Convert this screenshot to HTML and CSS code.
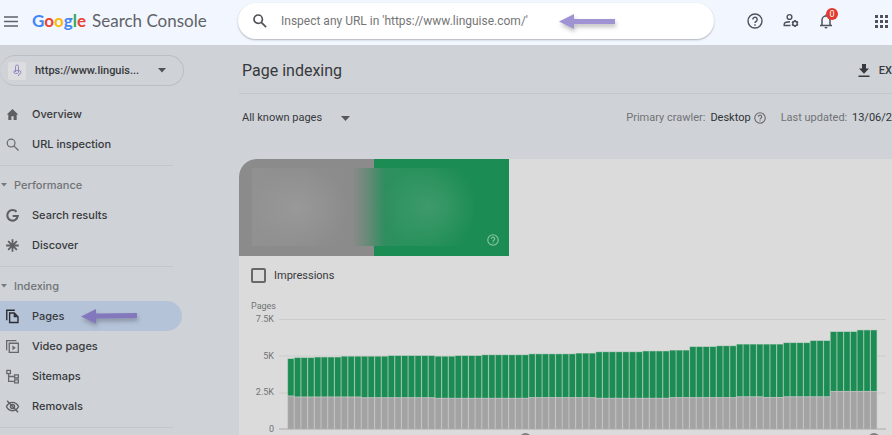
FILE: index.html
```html
<!DOCTYPE html>
<html lang="en">
<head>
<meta charset="utf-8">
<title>Google Search Console</title>
<link rel="stylesheet" href="styles.css">
</head>
<body>
<header class="topbar">
  <div class="brand">
    <button class="icon-btn menu" aria-label="Main menu"><svg width="14" height="11" viewBox="0 0 14 11"><path d="M0 1h14M0 5.5h14M0 10h14" stroke="#5f6368" stroke-width="1.5"/></svg></button>
    <a class="logo" href="#"><span class="google"><span class="b">G</span><span class="r">o</span><span class="y">o</span><span class="b">g</span><span class="g">l</span><span class="r">e</span></span><span class="product">Search Console</span></a>
  </div>
  <form class="search">
    <svg class="search-icon" width="14" height="14" viewBox="0 0 14 14" fill="none" stroke="#4f5257" stroke-width="1.7"><circle cx="5.2" cy="5.2" r="4.2"/><path d="M8.3 8.3l4.8 4.8"/></svg>
    <input type="text" aria-label="Inspect URL" placeholder="Inspect any URL in 'https://www.linguise.com/'">
    <svg class="arrow arrow-search" width="60" height="20" viewBox="0 0 60 20"><path d="M1 8.5L16 1v5h41v5H16v5z" fill="#a093d4"/></svg>
  </form>
  <div class="actions">
    <button class="icon-btn" aria-label="Help"><svg width="16" height="16" viewBox="0 0 16 16" fill="none" stroke="#4f5257" stroke-width="1.4"><circle cx="8" cy="8" r="7"/><path d="M5.8 6.4a2.2 2.2 0 1 1 3.5 1.8C8.500 8.800 8 9.100 8 10.100"/><path d="M8 11.200v1.500"/></svg></button>
    <button class="icon-btn" aria-label="User settings"><svg width="16" height="16" viewBox="0 0 16 16" fill="none" stroke="#4f5257" stroke-width="1.400"><circle cx="6.500" cy="4" r="2.400"/><path d="M7.500 12.500H1.200v-1.200C1.200 9.600 4 8.800 7 8.800"/><circle cx="12" cy="10.500" r="2.200"/><path d="M12 7v1.300M12 12.700V14M9 8.750l1.100.65M13.900 11.600l1.100.65M9 12.250l1.100-.65M13.900 9.400l1.100-.65" stroke-width="1.700"/></svg></button>
    <button class="icon-btn bell" aria-label="Notifications"><svg width="14" height="16" viewBox="0 0 14 16"><path d="M1 12.500h12M3 12.300V7a4 4 0 0 1 8 0v5.300M7 3V1.500" fill="none" stroke="#4f5257" stroke-width="1.500"/><path d="M5.500 14h3a1.500 1.500 0 0 1-3 0z" fill="#4f5257"/></svg><span class="badge">0</span></button>
    <button class="icon-btn" aria-label="Google apps"><svg width="13" height="13" viewBox="0 0 13 13" fill="#4f5257"><path d="M0 0h3v3H0zM5 0h3v3H5zM10 0h3v3h-3zM0 5h3v3H0zM5 5h3v3H5zM10 5h3v3h-3zM0 10h3v3H0zM5 10h3v3H5zM10 10h3v3h-3z"/></svg></button>
  </div>
</header>
<div class="layout">
  <nav class="sidebar">
    <button class="property">
      <span class="favicon"><svg width="9" height="13" viewBox="0 0 9 13" fill="none" stroke="#8f89c4" stroke-width="1"><path d="M2.500 8V2.500a1.500 1.500 0 0 1 3 0V8c0 1-.8 1.400-1.500 1.400H2.300a1.400 1.400 0 0 1 0-2.800h3.900a1.700 1.700 0 0 1 0 3.400L5.200 12"/></svg></span>
      <span class="property-name">https://www.linguis...</span>
      <svg width="8" height="5" viewBox="0 0 8 5"><path d="M0 0h8L4 4.500z" fill="#505256"/></svg>
    </button>
    <a class="item" href="#"><svg viewBox="0 0 14 14"><path d="M7 1L.8 7h1.700v6h3.300V9h2.400v4h3.300V7h1.700z" fill="#5d5f62"/></svg>Overview</a>
    <a class="item" href="#"><svg viewBox="0 0 14 14" fill="none" stroke="#66686b" stroke-width="1.300"><circle cx="5.500" cy="5.500" r="4.200"/><path d="M8.500 8.500l5 5"/></svg>URL inspection</a>
    <hr>
    <button class="group"><svg width="6" height="4" viewBox="0 0 6 4"><path d="M0 0h6L3 3.500z" fill="#77797c"/></svg>Performance</button>
    <a class="item" href="#"><svg viewBox="0 0 14 14"><path d="M11.300 3A5.700 5.700 0 1 0 12.700 7.500H7.200" fill="none" stroke="#5d5f62" stroke-width="2.300"/></svg>Search results</a>
    <a class="item" href="#"><svg viewBox="0 0 14 14"><path d="M7 .2v13.600M.2 7h13.600M2.300 2.300l9.400 9.400M11.700 2.300l-9.400 9.400" stroke="#5d5f62" stroke-width="1.900"/></svg>Discover</a>
    <hr>
    <button class="group"><svg width="6" height="4" viewBox="0 0 6 4"><path d="M0 0h6L3 3.500z" fill="#77797c"/></svg>Indexing</button>
    <a class="item selected" href="#" aria-current="page"><svg viewBox="0 0 14 14" fill="none" stroke="#2b2d31" stroke-width="1.500"><path d="M.8 11V.3h8.700"/><path d="M3.900 3.300h5l4 4v6.200h-9z"/><path d="M8.300 3.500v4.200h4.300z" fill="#2b2d31" stroke="none"/></svg>Pages
      <svg class="arrow arrow-pages" width="60" height="20" viewBox="0 0 60 20"><path d="M1 8.500L16 1v4.500l41-.5v5l-41 .5v5z" fill="#8378bd"/></svg></a>
    <a class="item" href="#"><svg viewBox="0 0 14 14" fill="none" stroke="#66686b" stroke-width="1.400"><path d="M.7 11V.7h10.500"/><path d="M3.500 3.500h9.800v9.800H3.500z"/><path d="M6.900 5.800v5.200l3.700-2.600z" fill="#66686b" stroke="none"/></svg>Video pages</a>
    <a class="item" href="#"><svg viewBox="0 0 14 14" fill="none" stroke="#66686b" stroke-width="1.400"><path d="M.9.500h3.800v3.500H.9zM9.300 5.300h4v3.300h-4zM9.300 10.600h4v3.200h-4zM2.800 4v8.200h6.500M2.800 7h6.500"/></svg>Sitemaps</a>
    <a class="item" href="#"><svg viewBox="0 0 14 14" fill="none" stroke="#5d5f62" stroke-width="1.500"><path d="M.5 7C1.900 4.100 4.100 2.500 7 2.500S12.100 4.100 13.500 7c-1.400 2.900-3.600 4.500-6.500 4.500S1.900 9.900.5 7z"/><circle cx="7" cy="7" r="2.200"/><path d="M1.200.9l11.800 12.200"/></svg>Removals</a>
    <hr>
  </nav>
  <main>
    <div class="title-row">
      <h1>Page indexing</h1>
      <button class="export"><svg width="12" height="14" viewBox="0 0 12 14"><path d="M4 0h4v4.500h3L6 9.800 1 4.500h3zM.500 11.500h11V13H.500z" fill="#37393c"/></svg>EX</button>
    </div>
    <div class="filter-row">
      <button class="filter">All known pages<svg width="9" height="5" viewBox="0 0 9 5"><path d="M0 0h9L4.500 5z" fill="#55575a"/></svg></button>
      <div class="meta">
        <span class="crawler">Primary crawler: <b>Desktop</b><svg width="12" height="12" viewBox="0 0 16 16" fill="none" stroke="#66686b" stroke-width="1.500"><circle cx="8" cy="8" r="7"/><path d="M5.800 6.400a2.200 2.200 0 1 1 3.500 1.800C8.500 8.800 8 9.100 8 10.100M8 11.200v1.500"/></svg></span>
        <span>Last updated: <b>13/06/2</b></span>
      </div>
    </div>
    <section class="card">
      <div class="tiles">
        <div class="tile"></div>
        <div class="tile indexed"><svg width="12" height="12" viewBox="0 0 16 16" fill="none" stroke="#8cc5a5" stroke-width="1.500"><circle cx="8" cy="8" r="7"/><path d="M5.800 6.400a2.200 2.200 0 1 1 3.500 1.800C8.500 8.800 8 9.100 8 10.100M8 11.200v1.500"/></svg></div>
        <div class="smudge"></div>
      </div>
      <label class="impressions"><input type="checkbox">Impressions</label>
      <div class="chart">
        <div class="chart-title">Pages</div>
        <div class="axis"><span>7.5K</span><span>5K</span><span>2.5K</span><span>0</span></div>
        <svg class="plot" id="plot" viewBox="0 0 607 110" preserveAspectRatio="none"></svg>
      </div>
    </section>
  </main>
</div>
<script src="chart.js"></script>
</body>
</html>
```
FILE: styles.css
```css
* { box-sizing: border-box; }

body {
  margin: 0;
  min-height: 100vh;
  display: flex;
  flex-direction: column;
  overflow-x: hidden;
  background: #cfd2d7;
  color: #37393c;
  font: 11px/16px Roboto, "Liberation Sans", sans-serif;
}

button {
  padding: 0;
  border: 0;
  background: none;
  color: inherit;
  font: inherit;
}

a { color: inherit; text-decoration: none; }
svg { display: block; flex: none; }

.topbar {
  display: flex;
  height: 45px;
  background: #f2f6fe;
}

.brand {
  display: flex;
  align-items: center;
  flex: none;
  width: 238px;
  padding: 0 0 3px 4px;
}

.logo {
  display: flex;
  align-items: baseline;
  gap: 6px;
  margin-left: 14px;
  font: 17px/24px Lato, sans-serif;
  color: #5f6368;
  white-space: nowrap;
}

.google { font-weight: 700; }
.b { color: #4285f4; }
.r { color: #ea4335; }
.y { color: #fbbc05; }
.g { color: #34a853; }

.search {
  position: relative;
  flex: 1;
  display: flex;
  align-items: center;
  height: 36px;
  margin-top: 3px;
  padding: 0 15px;
  border-radius: 18px;
  background: #fff;
  box-shadow: 0 1px 2px #aeb2b8;
}

.search input {
  flex: 1;
  min-width: 0;
  margin-left: 14px;
  padding: 0;
  border: 0;
  outline: 0;
  background: none;
  font: 12px/16px Roboto, sans-serif;
}

.search input::placeholder { color: #757575; opacity: 1; }

.arrow {
  position: absolute;
  filter: drop-shadow(1px 3px 2px #00000040);
}

.arrow-search { left: 320px; top: 10px; }

.actions {
  display: flex;
  align-items: center;
  flex: none;
  width: 178px;
  padding: 0 4px 3px 33px;
}

.actions .icon-btn { margin-right: 20px; }
.actions .bell { position: relative; margin-right: 42px; }
.actions .icon-btn:last-child { margin-right: 0; }

.badge {
  position: absolute;
  left: 7px;
  top: -5px;
  width: 12px;
  height: 12px;
  border-radius: 50%;
  background: #e23a2e;
  color: #fff;
  font-size: 9px;
  line-height: 12px;
}

.layout { display: flex; flex: 1; }

.sidebar {
  flex: none;
  width: 239px;
  padding-top: 10px;
}

.property {
  display: flex;
  align-items: center;
  width: 184px;
  height: 31px;
  margin-bottom: 13px;
  padding: 0 17px 0 8px;
  border: 1px solid #bbbec2;
  border-left: 0;
  border-radius: 16px;
  font-weight: 500;
  text-align: left;
}

.favicon {
  display: grid;
  place-items: center;
  width: 18px;
  height: 18px;
  border-radius: 2px;
  background: #dddddf;
}

.property-name { flex: 1; margin-left: 9px; }

.item {
  position: relative;
  display: flex;
  align-items: center;
  gap: 13px;
  width: 182px;
  height: 30px;
  padding-left: 6px;
  border-radius: 0 15px 15px 0;
  font: 500 11px/16px Inter, sans-serif;
}

.item > svg:first-child { width: 13px; height: 13px; overflow: visible; }
.item.selected { background: #b5c3d9; }
.arrow-pages { left: 80px; top: 7px; }

hr {
  width: 173px;
  margin: 6px 0 4px;
  border: 0;
  border-top: 1px solid #c4c7ca;
}

.group {
  display: flex;
  align-items: center;
  gap: 7px;
  height: 30px;
  padding-left: 1px;
  color: #717376;
  font: 500 11px/16px Inter, sans-serif;
}

main {
  display: flex;
  flex-direction: column;
  flex: 1;
  min-width: 0;
  overflow: hidden;
}

.title-row {
  display: flex;
  align-items: center;
  justify-content: space-between;
  height: 49px;
  padding: 3px 0 0 3px;
  border-bottom: 1px solid #c4c7ca;
}

h1 {
  margin: 0;
  font: 400 16px/20px Roboto, sans-serif;
}

.export {
  display: flex;
  align-items: center;
  gap: 9px;
  font-weight: 500;
}

.filter-row {
  display: flex;
  align-items: center;
  justify-content: space-between;
  height: 48px;
  margin-bottom: 17px;
  padding-left: 3px;
  white-space: nowrap;
}

.filter { display: flex; align-items: center; gap: 19px; }
.meta { display: flex; gap: 15px; color: #717376; }
.meta b { margin-left: 2px; color: #303235; font-weight: 400; }
.crawler { display: flex; align-items: center; gap: 3px; }

.card {
  flex: 1;
  padding-bottom: 6px;
  overflow: hidden;
  border-top-left-radius: 18px;
  background: #dbdbdb;
}

.tiles {
  position: relative;
  display: grid;
  grid-template-columns: 1fr 1fr;
  width: 270px;
  height: 97px;
}

.tile { background: #8b8b8b; }

.indexed {
  display: flex;
  align-items: flex-end;
  justify-content: flex-end;
  padding: 10px;
  background: #1b8c53;
}

.smudge {
  position: absolute;
  inset: 9px 35px 10px 13px;
  background:
    radial-gradient(ellipse 50px 42px at 45px 40px, #9b9b9bcc, #96969600),
    radial-gradient(ellipse 48px 44px at 177px 39px, #449d6fcc, #3c996800),
    linear-gradient(90deg, #919191 0, #8b8b8b 100px, #6a8a79 115px, #2f8e5e 133px, #2a915d 150px, #1b8c5300 100%);
}

.impressions {
  display: flex;
  align-items: center;
  gap: 8px;
  height: 39px;
  padding-left: 12px;
}

.impressions input {
  appearance: none;
  width: 15px;
  height: 15px;
  margin: 0;
  border: 2px solid #66686b;
  border-radius: 2px;
}

.chart {
  display: grid;
  grid-template-columns: 35px 1fr;
  column-gap: 5px;
  padding-right: 6px;
  color: #717376;
  font-size: 9px;
  line-height: 12px;
}

.chart-title {
  grid-column: 1 / -1;
  height: 18px;
  padding: 5px 0 0 12px;
}

.axis {
  display: flex;
  flex-direction: column;
  justify-content: space-between;
  height: 122px;
  text-align: right;
}

.plot {
  width: 100%;
  height: 110px;
  margin-top: 6px;
  overflow: visible;
}

.gridline { stroke: #cccccc; }
.baseline { stroke: #aaaaaa; }
.bar-back-green { fill: #86b99c; }
.bar-back-grey { fill: #bcbcbc; }
.bar-green { fill: #1b8c53; }
.bar-grey { fill: #a3a3a3; }
.marker { fill: #808080; }
```
FILE: chart.js
```js
// Each run is [number of bars, indexed + not indexed height, not indexed height].
const runs = [
  [1, 70, 33], [3, 71, 32], [4, 71.5, 32], [3, 72.3, 32], [4, 72.3, 31.3],
  [7, 73, 31.3], [3, 72.3, 30.7], [4, 73, 30.7], [7, 73.8, 30.7],
  [7, 74.7, 31.4], [3, 75.4, 31.4], [7, 76.8, 30.7], [4, 77.6, 30.7],
  [3, 78.4, 31.4], [4, 82, 31.4], [3, 82.8, 31.4], [4, 84.4, 32.2],
  [3, 84.4, 31.5], [4, 85.9, 32.2], [3, 88, 32.2], [4, 97, 37.6], [3, 98.6, 37.6]
];
const plot = document.getElementById("plot");
const pitch = 6.7;
const parts = [];
const rect = (cls, x, y, w, h) =>
  parts.push(`<rect class="${cls}" x="${x}" y="${y}" width="${w}" height="${h}"/>`);
[0, 36.5, 73.5].forEach(y => parts.push(`<path class="gridline" d="M0 ${y + 0.5}H607"/>`));
let x = 8.5;
for (const [count, total, grey] of runs) {
  for (let i = 0; i < count; i++) {
    rect("bar-back-green", x, 109.5 - total, pitch, total - grey);
    rect("bar-back-grey", x, 109.5 - grey, pitch, grey);
    rect("bar-green", x + 0.6, 110 - total, pitch - 1.2, total - grey - 0.5);
    rect("bar-grey", x + 0.6, 110.5 - grey, pitch - 1.2, grey - 0.5);
    x += pitch;
  }
}
parts.push('<path class="baseline" d="M0 110H607"/>');
[246.5, 595].forEach(cx => parts.push(`<circle class="marker" cx="${cx}" cy="120" r="6"/>`));
plot.innerHTML = parts.join("");
```
